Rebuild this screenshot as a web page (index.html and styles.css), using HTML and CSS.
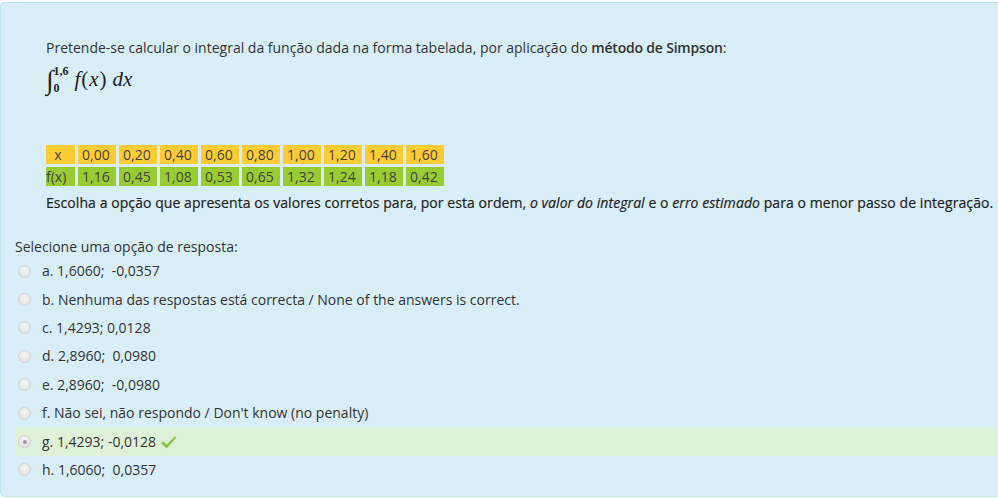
FILE: index.html
```html
<!DOCTYPE html>
<html lang="pt">
<head>
<meta charset="utf-8">
<link rel="stylesheet" href="styles.css">
</head>
<body>
<div class="que">
  <div class="qtext">
    <p class="intro">Pretende-se calcular o integral da função dada na forma tabelada, por aplicação do <b>método de Simpson</b>:</p>
    <div class="math"><span class="int">∫</span><span class="limits"><span class="sup">1,6</span><span class="sub">0</span></span><span class="mi">f</span><span class="mo">(</span><span class="mi">x</span><span class="mo">)</span><span class="mi d">d</span><span class="mi">x</span></div>
    <table class="data">
      <tr class="xrow"><td class="head c">x</td><td>0,00</td><td>0,20</td><td>0,40</td><td>0,60</td><td>0,80</td><td>1,00</td><td>1,20</td><td>1,40</td><td>1,60</td></tr>
      <tr class="frow"><td class="head">f(x)</td><td>1,16</td><td>0,45</td><td>1,08</td><td>0,53</td><td>0,65</td><td>1,32</td><td>1,24</td><td>1,18</td><td>0,42</td></tr>
    </table>
    <p class="ask">Escolha a opção que apresenta os valores corretos para, por esta ordem, <i>o valor do integral</i> e o <i>erro estimado</i> para o menor passo de integração.</p>
  </div>
  <div class="prompt">Selecione uma opção de resposta:</div>
  <div class="answers">
    <div class="opt"><span class="radio"></span><span>a. 1,6060;&nbsp; -0,0357</span></div>
    <div class="opt"><span class="radio"></span><span>b. Nenhuma das respostas está correcta / None of the answers is correct.</span></div>
    <div class="opt"><span class="radio"></span><span>c. 1,4293; 0,0128</span></div>
    <div class="opt"><span class="radio"></span><span>d. 2,8960;&nbsp; 0,0980</span></div>
    <div class="opt"><span class="radio"></span><span>e. 2,8960;&nbsp; -0,0980</span></div>
    <div class="opt"><span class="radio"></span><span>f. Não sei, não respondo / Don't know (no penalty)</span></div>
    <div class="opt correct"><span class="radio checked"></span><span>g. 1,4293; -0,0128</span><svg class="tick" width="17" height="15" viewBox="0 0 17 15"><path d="M1 8.2 L3.2 6.3 L6.6 9.6 L14.8 1.2 L16.4 2.8 L6.6 13.6 Z" fill="#8cc43f"/></svg></div>
    <div class="opt"><span class="radio"></span><span>h. 1,6060;&nbsp; 0,0357</span></div>
  </div>
</div>
</body>
</html>
```
FILE: styles.css
```css
html { overflow: hidden; }
body {
  margin: 0;
  padding-top: 2px;
  font-family: "Open Sans", "Liberation Sans", sans-serif;
  font-size: 14px;
  line-height: 20px;
  color: #333;
}
.que {
  width: 1020px;
  height: 495px;
  box-sizing: border-box;
  background: #d9edf7;
  border: 1px solid #bce8f1;
  border-radius: 4px;
  padding: 35px 0 0 14px;
}
.qtext { padding-left: 31px; }
.intro { margin: 0; }
.intro b { font-weight: 600; letter-spacing: -0.2px; }
.math {
  height: 32px;
  margin-top: 6px;
  display: flex;
  align-items: flex-start;
  font-family: "Liberation Serif", "DejaVu Serif", serif;
  font-size: 21px;
  color: #222;
}
.int { font-size: 27px; line-height: 32px; font-style: italic; margin-right: 0; }
.limits { display: flex; flex-direction: column; font-size: 12px; line-height: 11px; font-weight: bold; margin-right: 6px; }
.limits .sup { margin-top: 2px; }
.limits .sub { margin-top: 6px; }
.mi { font-style: italic; line-height: 30px; }
.mo { line-height: 30px; margin: 0 1px; }
.mi.d { margin-left: 5px; }
.data {
  border-collapse: separate;
  border-spacing: 3px;
  margin: 46px 0 0 -3px;
}
.data td {
  width: 38px;
  height: 19px;
  padding: 0 0 0 4px;
  box-sizing: border-box;
  line-height: 19px;
  color: #444;
}
.data td.head { width: 29px; padding: 0; }
.data td.c { text-align: center; padding-right: 5px; }
.xrow td { background: #ffcc33; }
.frow td { background: #99cc33; }
.ask { margin: 4px 0 0; color: #1e1e1e; letter-spacing: 0.07px; -webkit-text-stroke: 0.2px #1e1e1e; }
.prompt { margin-top: 24px; }
.answers { margin-top: 0; }
.opt {
  height: 28.4px;
  display: flex;
  align-items: center;
  padding-left: 3px;
}
.opt.correct { background: #dff0d8; }
.radio {
  width: 13px;
  height: 13px;
  box-sizing: border-box;
  border-radius: 50%;
  border: 1px solid #cfd3d6;
  background: radial-gradient(circle at 50% 35%, #f4f4f4 0%, #e2e4e6 70%, #d8dadc 100%);
  margin-right: 11px;
  position: relative;
}
.radio.checked::after {
  content: "";
  position: absolute;
  left: 3.5px;
  top: 3.5px;
  width: 4px;
  height: 4px;
  border-radius: 50%;
  background: #9a9a9a;
}
.tick { margin-left: 4px; margin-top: 2px; }
```
